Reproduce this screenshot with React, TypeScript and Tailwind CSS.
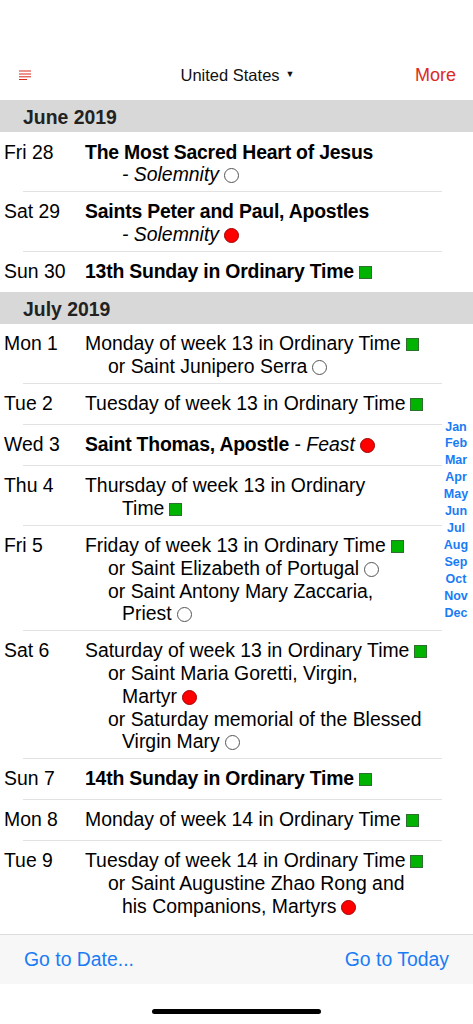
import type { ReactNode } from "react";

type Mark = "green" | "red" | "white";

type Line = {
  indent: 0 | 1 | 2;
  content: ReactNode;
  mark?: Mark;
};

type Day = {
  date: string;
  lines: Line[];
};

type Section = {
  title: string;
  days: Day[];
};

function B({ children }: { children: ReactNode }) {
  return <b className="tracking-[-0.2px]">{children}</b>;
}

const sections: Section[] = [
  {
    title: "June 2019",
    days: [
      {
        date: "Fri 28",
        lines: [
          { indent: 0, content: <B>The Most Sacred Heart of Jesus</B> },
          { indent: 2, content: <i>- Solemnity</i>, mark: "white" },
        ],
      },
      {
        date: "Sat 29",
        lines: [
          { indent: 0, content: <B>Saints Peter and Paul, Apostles</B> },
          { indent: 2, content: <i>- Solemnity</i>, mark: "red" },
        ],
      },
      {
        date: "Sun 30",
        lines: [
          { indent: 0, content: <B>13th Sunday in Ordinary Time</B>, mark: "green" },
        ],
      },
    ],
  },
  {
    title: "July 2019",
    days: [
      {
        date: "Mon 1",
        lines: [
          { indent: 0, content: "Monday of week 13 in Ordinary Time", mark: "green" },
          { indent: 1, content: "or Saint Junipero Serra", mark: "white" },
        ],
      },
      {
        date: "Tue 2",
        lines: [
          { indent: 0, content: "Tuesday of week 13 in Ordinary Time", mark: "green" },
        ],
      },
      {
        date: "Wed 3",
        lines: [
          {
            indent: 0,
            content: (
              <>
                <B>Saint Thomas, Apostle</B> - <i>Feast</i>
              </>
            ),
            mark: "red",
          },
        ],
      },
      {
        date: "Thu 4",
        lines: [
          { indent: 0, content: "Thursday of week 13 in Ordinary" },
          { indent: 2, content: "Time", mark: "green" },
        ],
      },
      {
        date: "Fri 5",
        lines: [
          { indent: 0, content: "Friday of week 13 in Ordinary Time", mark: "green" },
          { indent: 1, content: "or Saint Elizabeth of Portugal", mark: "white" },
          { indent: 1, content: "or Saint Antony Mary Zaccaria," },
          { indent: 2, content: "Priest", mark: "white" },
        ],
      },
      {
        date: "Sat 6",
        lines: [
          { indent: 0, content: "Saturday of week 13 in Ordinary Time", mark: "green" },
          { indent: 1, content: "or Saint Maria Goretti, Virgin," },
          { indent: 2, content: "Martyr", mark: "red" },
          { indent: 1, content: "or Saturday memorial of the Blessed" },
          { indent: 2, content: "Virgin Mary", mark: "white" },
        ],
      },
      {
        date: "Sun 7",
        lines: [
          { indent: 0, content: <B>14th Sunday in Ordinary Time</B>, mark: "green" },
        ],
      },
      {
        date: "Mon 8",
        lines: [
          { indent: 0, content: "Monday of week 14 in Ordinary Time", mark: "green" },
        ],
      },
      {
        date: "Tue 9",
        lines: [
          { indent: 0, content: "Tuesday of week 14 in Ordinary Time", mark: "green" },
          { indent: 1, content: "or Saint Augustine Zhao Rong and" },
          { indent: 2, content: "his Companions, Martyrs", mark: "red" },
        ],
      },
    ],
  },
];

const months = ["Jan", "Feb", "Mar", "Apr", "May", "Jun", "Jul", "Aug", "Sep", "Oct", "Nov", "Dec"];

function ColorMark({ mark }: { mark: Mark }) {
  if (mark === "green") {
    return (
      <span className="ml-[5px] inline-block h-[13px] w-[13px] border border-[#2f6f2f] bg-[#00b300] align-[-1px]" />
    );
  }
  if (mark === "red") {
    return (
      <span className="ml-[5px] inline-block h-[15px] w-[15px] rounded-full border border-[#a00000] bg-[#ff0000] align-[-2px]" />
    );
  }
  return (
    <span className="ml-[5px] inline-block h-[15px] w-[15px] rounded-full border border-[#555] bg-white align-[-2px]" />
  );
}

function DayRow({ day, last }: { day: Day; last: boolean }) {
  const single = day.lines.length === 1;
  return (
    <div>
      <div className={`flex pl-[4px] ${single ? "pt-[8px] pb-[9.3px]" : "pt-[8.5px] pb-[5px]"}`}>
        <div className="w-[81px] shrink-0 leading-[22.7px]">{day.date}</div>
        <div className="flex-1">
          {day.lines.map((line, i) => (
            <div
              key={i}
              className={`whitespace-nowrap leading-[22.7px] ${
                line.indent === 1 ? "pl-[23px]" : line.indent === 2 ? "pl-[37px]" : ""
              }`}
            >
              {line.content}
              {line.mark && <ColorMark mark={line.mark} />}
            </div>
          ))}
        </div>
      </div>
      {!last && <div className="ml-[23px] mr-[31px] h-px bg-[#e2e2e2]" />}
    </div>
  );
}

function MenuIcon() {
  return (
    <svg width="13" height="11" viewBox="0 0 13 11" className="text-[#dc2a1f]">
      <rect x="0" y="0.5" width="12" height="1" fill="currentColor" />
      <rect x="0" y="3.5" width="12" height="1" fill="currentColor" />
      <rect x="0" y="6.3" width="12" height="1" fill="currentColor" />
      <rect x="0" y="9" width="8" height="1" fill="currentColor" />
    </svg>
  );
}

export default function App() {
  return (
    <div className="flex h-[1024px] w-[473px] flex-col overflow-hidden bg-white font-['Liberation_Sans',Arial,sans-serif] text-black">
      <header className="h-[100px] shrink-0 pt-[52px]">
        <div className="flex h-[46px] items-center justify-between pl-[19px] pr-[17px]">
          <div className="w-[60px]">
            <MenuIcon />
          </div>
          <div className="flex items-center text-[16.5px] text-[#111]">
            United States
            <span className="ml-[6px] text-[9px]">▼</span>
          </div>
          <div className="w-[60px] text-right text-[18px] text-[#dc2a1f]">More</div>
        </div>
      </header>

      <main className="relative flex-1 overflow-hidden text-[19.4px]">
        {sections.map((section) => (
          <section key={section.title}>
            <div className="flex h-[32px] items-center bg-[#d8d8d8] pl-[23px] pt-[3px] text-[19.4px] font-bold text-[#222]">
              {section.title}
            </div>
            {section.days.map((day, i) => (
              <DayRow key={day.date} day={day} last={i === section.days.length - 1} />
            ))}
          </section>
        ))}

        <nav className="absolute inset-y-0 right-[3px] flex w-[28px] flex-col items-center justify-center pt-[6px]">
          {months.map((m) => (
            <span key={m} className="text-[12.5px] font-bold leading-[16.9px] text-[#1a7cf5]">
              {m}
            </span>
          ))}
        </nav>
      </main>

      <footer className="flex h-[50px] shrink-0 items-center justify-between border-t border-[#dcdcdc] bg-[#f7f7f7] px-[24px] text-[19.4px] text-[#1a7cf5]">
        <span>Go to Date...</span>
        <span>Go to Today</span>
      </footer>

      <div className="flex h-[40px] shrink-0 justify-center bg-white pt-[25px]">
        <div className="h-[5px] w-[169px] rounded-full bg-black" />
      </div>
    </div>
  );
}
